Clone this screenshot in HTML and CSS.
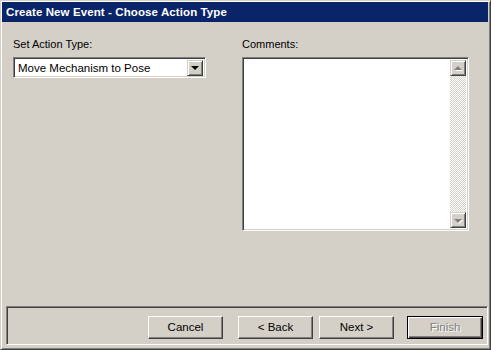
FILE: index.html
```html
<!DOCTYPE html>
<html lang="en">
<head>
    <meta charset="UTF-8">
    <title>Create New Event - Choose Action Type</title>
    <link rel="stylesheet" href="styles.css">
</head>
<body>
    <div class="window">
        <div class="titlebar">Create New Event - Choose Action Type</div>

        <div class="content">
            <div class="field">
                <label>Set Action Type:</label>
                <div class="combo">
                    <span class="combo-text">Move Mechanism to Pose</span>
                    <span class="combo-btn"><span class="tri-down"></span></span>
                </div>
            </div>
            <div class="field">
                <label>Comments:</label>
                <div class="memo">
                    <div class="memo-text"></div>
                    <div class="scrollbar">
                        <span class="sb-btn"><span class="tri-up"></span></span>
                        <span class="sb-track"></span>
                        <span class="sb-btn"><span class="tri-down gray"></span></span>
                    </div>
                </div>
            </div>
        </div>

        <div class="footer">
            <button class="btn">Cancel</button>
            <button class="btn btn-back">&lt; Back</button>
            <button class="btn btn-next">Next &gt;</button>
            <button class="btn btn-default" disabled>Finish</button>
        </div>
    </div>
</body>
</html>
```

FILE: styles.css
```css
body {
    margin: 0;
    background-color: #d4d0c8;
    font-family: "Liberation Sans", Arial, sans-serif;
    font-size: 11px;
    color: #000;
}
.window {
    width: 491px;
    height: 350px;
    box-sizing: border-box;
    display: flex;
    flex-direction: column;
    background-color: #d4d0c8;
    border: 1px solid;
    border-color: #d4d0c8 #404040 #404040 #d4d0c8;
    box-shadow: inset 1px 1px #fff, inset -1px -1px #808080;
    padding: 1px 2px 2px 1px;
}
.titlebar {
    height: 20px;
    line-height: 21px;
    padding-left: 4px;
    background-color: #0a246a;
    color: #fff;
    font-weight: bold;
    font-size: 11.5px;
    letter-spacing: 0.1px;
}
.content {
    flex: 1;
    display: grid;
    grid-template-columns: 193px 227px;
    column-gap: 36px;
    align-items: start;
    padding: 16px 0 0 11px;
}
.field label {
    display: block;
    line-height: 13px;
    margin-bottom: 6px;
}

/* sunken 2px border */
.combo, .memo {
    box-sizing: border-box;
    border: 1px solid;
    border-color: #808080 #fff #fff #808080;
    box-shadow: inset 1px 1px #404040, inset -1px -1px #d4d0c8;
    background-color: #fff;
    padding: 2px;
}
.combo {
    height: 21px;
    display: flex;
    align-items: center;
}
.combo-text {
    flex: 1;
    padding-left: 2px;
    font-size: 11.5px;
}
.combo-btn, .sb-btn {
    width: 16px;
    height: 16px;
    box-sizing: border-box;
    display: flex;
    align-items: center;
    justify-content: center;
    background-color: #d4d0c8;
    border: 1px solid;
    border-color: #d4d0c8 #404040 #404040 #d4d0c8;
    box-shadow: inset 1px 1px #fff, inset -1px -1px #808080;
}
.tri-down {
    width: 0;
    height: 0;
    border-left: 4px solid transparent;
    border-right: 4px solid transparent;
    border-top: 4px solid #000;
    margin-top: 1px;
}
.tri-down.gray {
    border-top-color: #808080;
    filter: drop-shadow(1px 1px 0 #fff);
}
.tri-up {
    width: 0;
    height: 0;
    border-left: 4px solid transparent;
    border-right: 4px solid transparent;
    border-bottom: 4px solid #808080;
    filter: drop-shadow(1px 1px 0 #fff);
    margin-bottom: 1px;
}
.memo {
    height: 174px;
    display: flex;
}
.memo-text {
    flex: 1;
}
.scrollbar {
    width: 16px;
    display: flex;
    flex-direction: column;
}
.sb-track {
    flex: 1;
    background: repeating-conic-gradient(#d4d0c8 0 25%, #fff 0 50%) 0 0 / 2px 2px;
}

.footer {
    height: 39px;
    margin: 0 0 2px 4px;
    box-sizing: border-box;
    display: flex;
    align-items: center;
    justify-content: flex-end;
    border: 1px solid;
    border-color: #808080 #fff #fff #808080;
    box-shadow: inset 1px 1px #404040;
    padding: 0 4px 0 0;
}
.btn {
    width: 75px;
    height: 23px;
    box-sizing: border-box;
    margin-top: 3px;
    padding: 0;
    font-family: "Liberation Sans", Arial, sans-serif;
    font-size: 11.5px;
    color: #000;
    background-color: #d4d0c8;
    border: 1px solid;
    border-color: #fff #404040 #404040 #fff;
    box-shadow: inset -1px -1px #808080;
}
.btn-back {
    margin-left: 15px;
}
.btn-next {
    margin-left: 6px;
}
.btn-default {
    margin-left: 13px;
    width: 76px;
    border: 1px solid #000;
    box-shadow: inset 1px 1px #fff, inset -1px -1px #404040, inset -2px -2px #808080;
    color: #808080;
    text-shadow: 1px 1px 0 #fff;
}
```
